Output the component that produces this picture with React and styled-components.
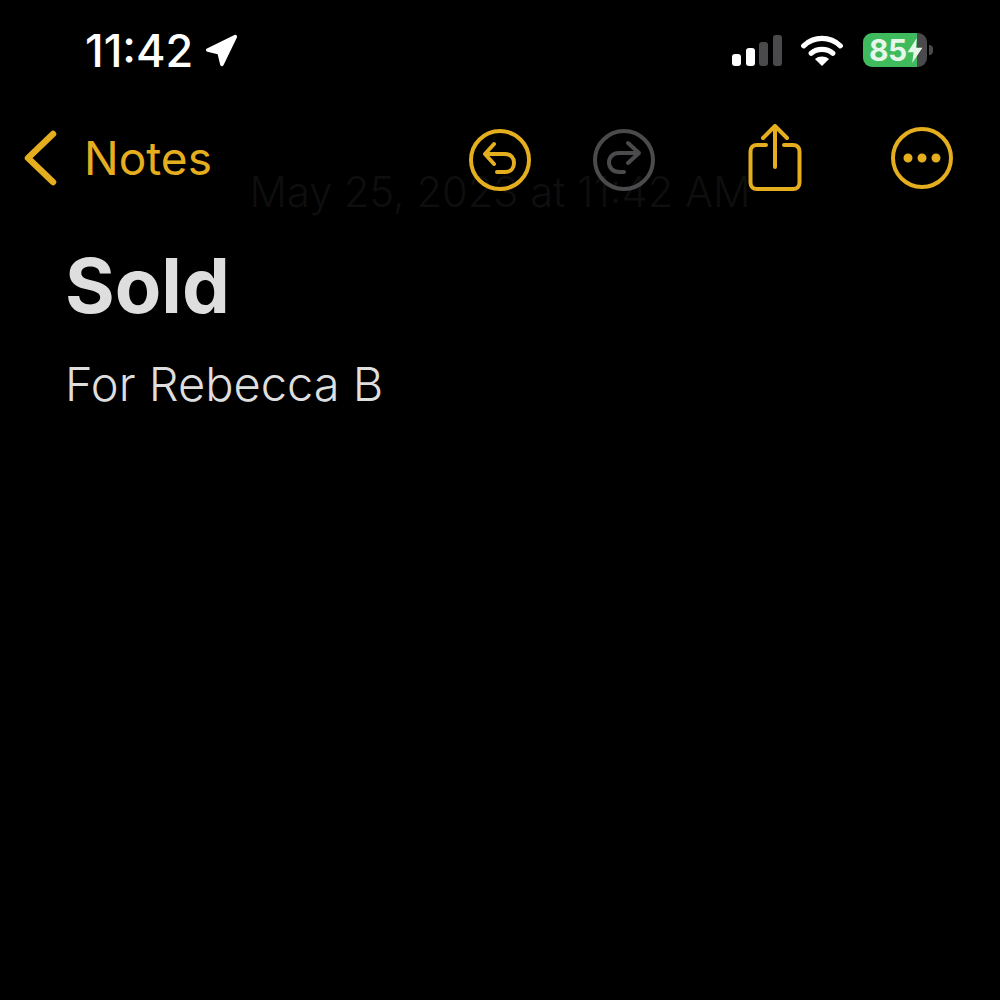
import React from 'react';
import styled, { createGlobalStyle } from 'styled-components';

const GOLD = '#e5ae1f';
const MUTED = '#4b4b4d';

const GlobalStyle = createGlobalStyle`
	html, body {
		margin: 0;
		padding: 0;
		background: #000;
	}
`;

const Screen = styled.div`
	box-sizing: border-box;
	width: 1000px;
	height: 1000px;
	background: #000;
	overflow: hidden;
	font-family: Inter, 'Liberation Sans', sans-serif;
`;

const StatusBar = styled.div`
	box-sizing: border-box;
	height: 100px;
	padding: 25px 73px 0 85px;
	display: flex;
	align-items: flex-start;
	justify-content: space-between;
	color: #fff;
`;

const Clock = styled.div`
	display: flex;
	align-items: center;
	gap: 12px;
	height: 50px;
	font-size: 45px;
	font-weight: 500;
`;

const StatusIcons = styled.div`
	display: flex;
	align-items: center;
	height: 50px;
`;

const Battery = styled.div`
	box-sizing: border-box;
	position: relative;
	width: 64px;
	height: 34px;
	margin-left: 20px;
	padding-left: 6px;
	border-radius: 9px;
	background: linear-gradient(to right, #3fbb5e 0 54px, #4a4a4c 54px);
	color: #e6f7ea;
	display: flex;
	align-items: center;
	font-size: 30px;
	font-weight: 700;
	letter-spacing: -0.5px;
`;

const BatteryBolt = styled.svg`
	position: absolute;
	left: 44px;
	top: 5px;
`;

const BatteryCap = styled.div`
	position: absolute;
	right: -6px;
	top: 12px;
	width: 4px;
	height: 10px;
	border-radius: 0 5px 5px 0;
	background: #4a4a4c;
`;

const NavBar = styled.div`
	box-sizing: border-box;
	position: relative;
	z-index: 1;
	height: 116px;
	padding: 0 46px 0 24px;
	display: flex;
	align-items: center;
	justify-content: space-between;
`;

const BackLink = styled.div`
	display: flex;
	align-items: center;
	gap: 26px;
	color: ${GOLD};
	font-size: 46px;
	font-weight: 400;
`;

const Actions = styled.div`
	display: flex;
	align-items: center;
`;

const Action = styled.div`
	display: flex;
	margin-left: ${(props) => props.$offset || 0}px;
	padding-top: ${(props) => props.$drop || 0}px;
`;

const DateLine = styled.div`
	margin-top: -47px;
	text-align: center;
	color: #0e0e0e;
	font-size: 41.6px;
	font-weight: 300;
	line-height: 46px;
`;

const Note = styled.div`
	padding: 24px 65px 0;
`;

const Title = styled.h1`
	margin: 0;
	color: #dedede;
	font-size: 76px;
	font-weight: 700;
	line-height: 92px;
`;

const BodyText = styled.p`
	margin: 25px 0 0;
	color: #dedede;
	font-size: 47px;
	font-weight: 300;
	line-height: 56px;
`;

function LocationArrow() {
	return (
		<svg width="33" height="33" viewBox="0 0 36 36">
			<path d="M3 17.500 33 3 18.500 33 15.500 20.500Z" fill="#fff" stroke="#fff" strokeWidth="4" strokeLinejoin="round" />
		</svg>
	);
}

function SignalBars() {
	return (
		<svg width="50" height="31" viewBox="0 0 50 31">
			<rect x="0" y="19" width="9" height="12" rx="3" fill="#fff" />
			<rect x="14" y="13" width="9" height="18" rx="3" fill="#fff" />
			<rect x="27" y="7" width="9" height="24" rx="3" fill="#4a4a4c" />
			<rect x="41" y="0" width="9" height="31" rx="3" fill="#4a4a4c" />
		</svg>
	);
}

function Wifi() {
	return (
		<svg width="42" height="31" viewBox="0 0 44 33" style={{ marginLeft: 19 }}>
			<path d="M2.500 11.500C13.500 1 30.500 1 41.500 11.500" stroke="#fff" strokeWidth="5.500" fill="none" strokeLinecap="round" />
			<path d="M10.500 19.500c6.500-5.500 16.500-5.500 23 0" stroke="#fff" strokeWidth="5.500" fill="none" strokeLinecap="round" />
			<path d="M14.500 25.500c4-3.500 11-3.500 15 0L22 33Z" fill="#fff" />
		</svg>
	);
}

function CircleIcon({ color, children }) {
	return (
		<svg width="64" height="64" viewBox="0 0 64 64" fill="none" stroke={color} strokeWidth="4" strokeLinecap="round" strokeLinejoin="round">
			<circle cx="32" cy="32" r="29" />
			{children}
		</svg>
	);
}

function ShareIcon() {
	return (
		<svg width="55" height="68" viewBox="0 0 55 68" fill="none" stroke={GOLD} strokeWidth="4" strokeLinecap="round" strokeLinejoin="round">
			<path d="M18 21H9c-4 0-6.500 2.500-6.500 6.500v31C2.500 62.500 5 65 9 65h36c4 0 6.500-2.500 6.500-6.500v-31C51.500 23.500 49 21 45 21h-9" />
			<path d="M27 43V2M15 14 27 2l12 12" />
		</svg>
	);
}

export default function App() {
	return (
		<Screen>
			<GlobalStyle />
			<StatusBar>
				<Clock>
					11:42
					<LocationArrow />
				</Clock>
				<StatusIcons>
					<SignalBars />
					<Wifi />
					<Battery>
						85
						<BatteryBolt width="16" height="25" viewBox="0 0 16 27">
							<path d="M10 0 0 15.500h6.500L5 27l11-16.500H9Z" fill="#e6f7ea" />
						</BatteryBolt>
						<BatteryCap />
					</Battery>
				</StatusIcons>
			</StatusBar>
			<NavBar>
				<BackLink>
					<svg width="34" height="56" viewBox="0 0 34 56" fill="none" stroke={GOLD} strokeWidth="6.500" strokeLinecap="round" strokeLinejoin="round">
						<path d="M29 4 4 28l25 24" />
					</svg>
					Notes
				</BackLink>
				<Actions>
					<Action $drop={3}>
						<CircleIcon color={GOLD}>
							<path d="M26 16 17 26l9 10M17 26h20c6 0 9 4 9 9s-3 9-9 9h-8" />
						</CircleIcon>
					</Action>
					<Action $offset={60} $drop={3}>
						<CircleIcon color={MUTED}>
							<path d="M36 15l11 10-11 10M47 25H27c-6 0-10 4-10 9.500S21 44 27 44h5" />
						</CircleIcon>
					</Action>
					<Action $offset={92}>
						<ShareIcon />
					</Action>
					<Action $offset={87}>
						<CircleIcon color={GOLD}>
							<circle cx="18" cy="32" r="2.500" fill={GOLD} />
							<circle cx="32" cy="32" r="2.500" fill={GOLD} />
							<circle cx="46" cy="32" r="2.500" fill={GOLD} />
						</CircleIcon>
					</Action>
				</Actions>
			</NavBar>
			<DateLine>May 25, 2023 at 11:42 AM</DateLine>
			<Note>
				<Title>Sold</Title>
				<BodyText>For Rebecca B</BodyText>
			</Note>
		</Screen>
	);
}
